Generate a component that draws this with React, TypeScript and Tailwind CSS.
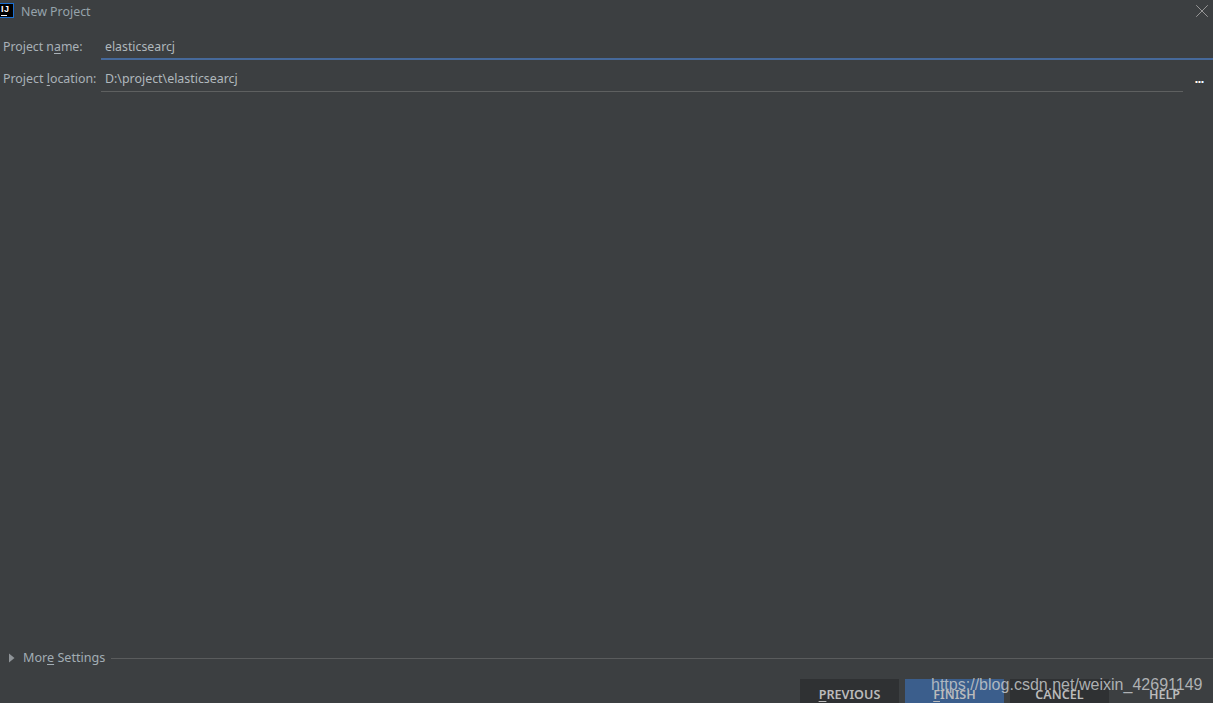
import { X } from "lucide-react";

const font = "font-['Noto_Sans','Open_Sans',sans-serif]";

function Underlined({ before, letter, after }: { before: string; letter: string; after: string }) {
  return (
    <span className="whitespace-pre">
      {before}
      <span className="underline underline-offset-2">{letter}</span>
      {after}
    </span>
  );
}

function DialogButton({ children, className }: { children: React.ReactNode; className: string }) {
  return (
    <div className={`flex h-[24px] w-[99px] items-end justify-center whitespace-nowrap text-[12.6px] leading-[17px] font-semibold text-[#bbbbbb] ${className}`}>
      {children}
    </div>
  );
}

export default function App() {
  return (
    <div className={`relative flex h-[703px] w-[1213px] flex-col overflow-hidden bg-[#3c3f41] text-[#a9b1b8] ${font}`}>
      {/* Title bar */}
      <div className="flex h-[23px] shrink-0 items-center">
        <div className="flex h-[15px] w-[14px] -translate-y-[1px] flex-col border border-l-0 border-[#1c6fd0] bg-black pl-[1px] pt-[1px]">
          <span className="font-['Liberation_Sans',sans-serif] text-[9px] leading-[8px] font-bold tracking-[0.5px] text-white">IJ</span>
          <span className="mt-[2px] h-[1px] w-[6px] bg-white" />
        </div>
        <span className="ml-[7px] text-[12.4px] leading-[18px] text-[#96a3ab]">New Project</span>
        <X className="ml-auto -translate-y-[1px] text-[#a0a0a0]" size={22} strokeWidth={1} />
      </div>

      {/* Form */}
      <div className="flex h-[37px] shrink-0 items-stretch">
        <label className="flex w-[101px] shrink-0 items-center pl-[3px] pt-[12px] text-[12.3px] whitespace-nowrap text-[#a9b1b8]">
          <Underlined before="Project n" letter="a" after="me:" />
        </label>
        <div className="flex flex-1 items-center border-b-2 border-[#46699a] pl-[4px] pt-[13px] text-[12.3px] text-[#b0b8bd]">
          elasticsearcj
        </div>
      </div>
      <div className="flex h-[32px] shrink-0 items-stretch">
        <label className="flex w-[101px] shrink-0 items-center pl-[3px] pt-[7px] text-[12.4px] whitespace-nowrap text-[#a9b1b8]">
          <Underlined before="Project " letter="l" after="ocation:" />
        </label>
        <div className="flex w-[1082px] items-center border-b border-[#5e6060] pl-[4px] pt-[7px] text-[12.4px] text-[#b0b8bd]">
          D:\project\elasticsearcj
        </div>
        <div className="flex flex-1 items-end justify-center pb-[9px] pl-[2px]">
          <span className="h-[2px] w-[9px] bg-[repeating-linear-gradient(90deg,#c9a27c_0,#c9a27c_1px,#ffffff_1px,#ffffff_2px,#7ba6cf_2px,#7ba6cf_3px)]" />
        </div>
      </div>

      <div className="flex-1" />

      {/* More settings */}
      <div className="flex h-[20px] shrink-0 items-center pl-[9px]">
        <svg width="6" height="10" viewBox="0 0 6 10" className="shrink-0 -translate-y-[1px]">
          <path d="M0 0.5 L5.5 5 L0 9.5 Z" fill="#8f9498" />
        </svg>
        <span className="ml-[8px] -translate-y-[1px] text-[12.6px] text-[#a2adb4]">
          <Underlined before="Mor" letter="e" after=" Settings" />
        </span>
        <div className="ml-[6px] h-[1px] flex-1 -translate-y-[1px] bg-[#5a5c5d]" />
      </div>

      {/* Buttons */}
      <div className="mt-[10px] -mr-[1px] flex h-[24px] shrink-0 justify-end gap-[6px]">
        <DialogButton className="bg-[#2f3133]">
          <Underlined before="" letter="P" after="REVIOUS" />
        </DialogButton>
        <DialogButton className="bg-[#3b5e8c]">
          <Underlined before="" letter="F" after="INISH" />
        </DialogButton>
        <DialogButton className="bg-[#2f3133]">CANCEL</DialogButton>
        <DialogButton className="bg-[#3c3f41]">HELP</DialogButton>
      </div>

      {/* Blog watermark */}
      <span className="pointer-events-none absolute left-[931px] top-[673px] font-['Liberation_Sans',sans-serif] text-[16.05px] leading-[22px] whitespace-nowrap text-[#c5c8ca]/85">
        https://blog.csdn.net/weixin_42691149
      </span>
    </div>
  );
}
